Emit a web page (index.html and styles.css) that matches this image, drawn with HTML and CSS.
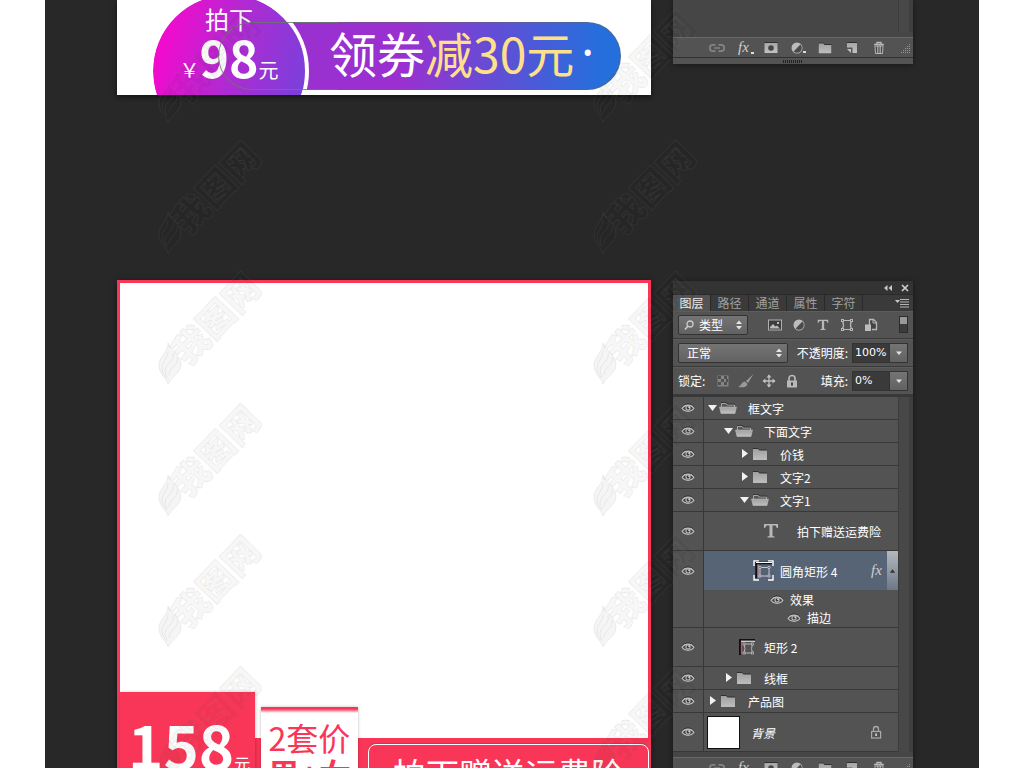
FILE: index.html
```html
<!DOCTYPE html>
<html lang="zh-CN">
<head>
<meta charset="utf-8">
<meta name="viewport" content="width=device-width, initial-scale=1">
<title>图层</title>
<link rel="stylesheet" href="styles.css">
</head>
<body>
<svg class="sprite" aria-hidden="true">
  <defs>
    <linearGradient id="metal" x1="0" y1="0" x2="0" y2="1"><stop offset="0" stop-color="#a6a6a6"/><stop offset="1" stop-color="#c2c2c2"/></linearGradient>
    <linearGradient id="fold" x1="0" y1="0" x2="0" y2="1"><stop offset="0" stop-color="#a0a0a0"/><stop offset="1" stop-color="#bebebe"/></linearGradient>
  </defs>
  <symbol id="eye" viewBox="0 0 14 12">
    <path d="M1 5.2C3.4.9 10.6.9 13 5.2" fill="none" stroke="#2c2c2c" stroke-width="1"/>
    <path d="M1.2 6.3C3.5 2.2 10.5 2.2 12.8 6.3C10.5 10.3 3.5 10.3 1.2 6.3Z" fill="#454545" stroke="#bcbcbc" stroke-width="1.3"/>
    <circle cx="7" cy="6" r="2.6" fill="#b4b4b4"/><circle cx="7" cy="6" r="1.4" fill="#3a3a3a"/><circle cx="8" cy="5.3" r=".8" fill="#e6e6e6"/>
  </symbol>
  <symbol id="open" viewBox="0 0 12 12"><path d="M1 3H10L5.500 9Z" fill="#f2f2f2"/></symbol>
  <symbol id="closed" viewBox="0 0 12 12"><path d="M3 1V10L9 5.500Z" fill="#f2f2f2"/></symbol>
  <symbol id="folder" viewBox="0 0 18 14">
    <path d="M2 1H7L8 2.500H16V4H2Z" fill="#303030"/>
    <path d="M2 2H7L8.500 3.500H16V13H2Z" fill="url(#fold)"/>
  </symbol>
  <symbol id="folder-open" viewBox="0 0 18 14">
    <path d="M2.500 6V2.500H7L8 4H15.500V6" fill="#555" stroke="#a6a6a6" stroke-width="1"/>
    <path d="M2 1.500H7.500L8.500 3H16" fill="none" stroke="#303030" stroke-width=".8"/>
    <path d="M.5 6H17.500L16 12.500H2Z" fill="url(#fold)" stroke="#c4c4c4" stroke-width=".5"/>
  </symbol>
  <symbol id="shape" viewBox="0 0 14 14">
    <path d="M3 2.500H11M3 11.500H11M2.500 3Q4.500 7 2.500 11M11.500 3Q9.500 7 11.500 11" fill="none" stroke="#b8b8b8" stroke-width="1.200"/>
    <g fill="#484848" stroke="#b8b8b8"><rect x="1.500" y="1.500" width="2" height="2"/><rect x="10.500" y="1.500" width="2" height="2"/><rect x="1.500" y="10.500" width="2" height="2"/><rect x="10.500" y="10.500" width="2" height="2"/></g>
  </symbol>
  <symbol id="type" viewBox="0 0 16 16"><path d="M1 1H15V5H14L12.500 2.500H9.500V13L11.500 13.500V14.500H4.500V13.500L6.500 13V2.500H3.500L2 5H1Z" fill="#b8b8b8"/></symbol>
  <symbol id="adjust" viewBox="0 0 14 14"><circle cx="7" cy="7" r="5.500" fill="#bcbcbc"/><path d="M10.400 3.600A4.700 4.700 0 0 1 3.600 10.400Z" fill="#4a4a4a"/></symbol>
  <symbol id="lock" viewBox="0 0 12 14"><path d="M3 7V4.500A3 3 0 0 1 9 4.500V7" fill="none" stroke="#b8b8b8" stroke-width="1.700"/><rect x="1" y="6.500" width="10" height="7" fill="#b8b8b8"/><rect x="5" y="8.500" width="2" height="3" fill="#444"/></symbol>
  <symbol id="lock-line" viewBox="0 0 12 14"><path d="M3.500 6V4A2.500 2.500 0 0 1 8.500 4V6" fill="none" stroke="#aaa" stroke-width="1.300"/><rect x="1.600" y="6.500" width="9" height="6.500" fill="#505050" stroke="#aaa" stroke-width="1.200"/><rect x="5.200" y="8.500" width="1.800" height="2.500" fill="#ccc"/></symbol>
  <symbol id="updown" viewBox="0 0 8 10"><path d="M1 4L4 .5L7 4ZM1 6L4 9.500L7 6Z" fill="#e4e4e4"/></symbol>
  <symbol id="down" viewBox="0 0 8 8"><path d="M1 2.500H7L4 6Z" fill="#e4e4e4"/></symbol>
  <symbol id="link" viewBox="0 0 16 12"><path d="M6.500 2.800H4A3.200 3.200 0 0 0 4 9.200H6.500M9.500 2.800H12A3.200 3.200 0 0 1 12 9.200H9.500M5 6H11" fill="none" stroke="#858585" stroke-width="1.700"/></symbol>
  <symbol id="fx" viewBox="0 0 18 16"><text x="4" y="12" class="fx-glyph">fx</text></symbol>
  <symbol id="mask" viewBox="0 0 14 12"><path d="M.5 0H13.500V2H.5Z" fill="#303030"/><rect x=".5" y="1" width="13" height="10" fill="url(#metal)"/><circle cx="7" cy="6" r="2.800" fill="#444"/></symbol>
  <symbol id="new" viewBox="0 0 12 12"><path d="M1 0H11V2H1Z" fill="#303030"/><path d="M1 1H11V11H6.500V5.500H1Z" fill="url(#metal)"/><path d="M1 7H5V11Z" fill="#c2c2c2"/></symbol>
  <symbol id="trash" viewBox="0 0 12 14"><path d="M1 3.500H11M4 3V1.500H8V3" fill="none" stroke="#b8b8b8" stroke-width="1.300"/><path d="M2 5H10L9.500 12.500H2.500Z" fill="#3c3c3c" stroke="#b8b8b8"/><path d="M4.400 5V12M6 5V12M7.600 5V12" stroke="#b8b8b8" stroke-width=".9"/></symbol>
  <symbol id="grip" viewBox="0 0 10 10"><path d="M8 1.500h1M6 3.500h1M8 3.500h1M4 5.500h1M6 5.500h1M8 5.500h1M2 7.500h1M4 7.500h1M6 7.500h1M8 7.500h1M0 9.500h1M2 9.500h1M4 9.500h1M6 9.500h1M8 9.500h1" stroke="#999"/></symbol>
  <symbol id="mark" viewBox="0 0 110 122">
    <path d="M11 76C13 84 23 86 24 97C24 106 16 108 11 117C9 110 2 108 2 98C2 89 11 86 11 76Z"/>
    <path d="M11 84C11 92 5 94 5 101C5 105 7 108 9 110M16 86C18 94 9 96 8 103C8 106 10 108 10 111M20 90C22 99 12 99 12 108" fill="none"/>
    <text transform="translate(31 100) rotate(-46)" x="0" y="0">我图网</text>
  </symbol>
</svg>

<main class="stage">
  <div class="pair pair-top">
    <section class="poster coupon" aria-label="优惠券">
      <div class="pill"><span>领券<b>减30元</b></span><span class="dot">·</span></div>
      <div class="disc">
        <span class="disc-label">拍下</span>
        <span class="disc-price"><small>￥</small><strong>98</strong><small>元</small></span>
      </div>
      <div class="pill-outline"></div>
    </section>
    <aside class="panel panel-end" aria-label="图层面板">
      <div class="layers"><div class="blank"></div><div class="scroll"></div></div>
      <div class="tools">
        <button aria-label="链接"><svg class="i16"><use href="#link"/></svg></button>
        <button aria-label="样式" class="more"><svg class="i18"><use href="#fx"/></svg></button>
        <button aria-label="蒙版"><svg class="i14"><use href="#mask"/></svg></button>
        <button aria-label="调整" class="more"><svg class="i14"><use href="#adjust"/></svg></button>
        <button aria-label="新建组"><svg class="i16"><use href="#folder"/></svg></button>
        <button aria-label="新建图层"><svg class="i12"><use href="#new"/></svg></button>
        <button aria-label="删除"><svg class="i14"><use href="#trash"/></svg></button>
        <svg class="grip"><use href="#grip"/></svg>
      </div>
      <div class="handle"><i></i></div>
    </aside>
  </div>

  <div class="pair">
    <section class="poster frame" aria-label="价格框">
      <div class="photo"></div>
      <div class="offers">
        <div class="price"><strong>158</strong><small>元</small></div>
        <div class="bundle"><span>2套价</span><b>男+女</b></div>
        <div class="banner">拍下赠送运费险</div>
      </div>
    </section>

    <aside class="panel panel-full" aria-label="图层">
      <div class="titlebar">
        <button aria-label="折叠"><svg class="i10" viewBox="0 0 10 10"><path d="M4.500 2V8L1 5ZM9 2V8L5.500 5Z" fill="#c8c8c8"/></svg></button>
        <button aria-label="关闭"><svg class="i10" viewBox="0 0 10 10"><path d="M2 2L8 8M8 2L2 8" stroke="#d0d0d0" stroke-width="1.600"/></svg></button>
      </div>
      <div class="tabs">
        <button class="on">图层</button><button>路径</button><button>通道</button><button>属性</button><button>字符</button>
        <button class="menu" aria-label="菜单"><svg viewBox="0 0 16 10"><path d="M1 2H6L3.500 5Z" fill="#c8c8c8"/><path d="M6 1.500H15M6 4H15M6 6.500H15M6 9H15" stroke="#b4b4b4"/></svg></button>
      </div>
      <div class="bar filter">
        <label class="combo kind">
          <svg class="lens" viewBox="0 0 12 12"><circle cx="7" cy="5" r="3" fill="none" stroke="#ccc" stroke-width="1.300"/><path d="M5 7L2 10.500" stroke="#ccc" stroke-width="1.600"/></svg>
          <select aria-label="筛选类型"><option>类型</option></select>
          <svg class="arrow"><use href="#updown"/></svg>
        </label>
        <div class="filters">
          <button aria-label="像素"><svg class="i14" viewBox="0 0 14 12"><rect x=".5" y="1" width="13" height="10" fill="#3d3d3d" stroke="#b0b0b0"/><path d="M2 9.500V8L5 5L7.500 7.500L9 6.500L12 9.500Z" fill="#bbb"/><rect x="9" y="3" width="2" height="2" fill="#bbb"/></svg></button>
          <button aria-label="调整"><svg class="i14"><use href="#adjust"/></svg></button>
          <button aria-label="文字"><svg class="i12"><use href="#type"/></svg></button>
          <button aria-label="形状"><svg class="i14"><use href="#shape"/></svg></button>
          <button aria-label="智能对象"><svg class="i14" viewBox="0 0 14 14"><path d="M5.500 7V1.500H9.500L12.500 4.500V11.500H8" fill="#444" stroke="#b8b8b8" stroke-width="1.300"/><path d="M9 1V5H13" fill="none" stroke="#b8b8b8"/><rect x="1" y="6.500" width="6" height="6.500" fill="#bcbcbc"/></svg></button>
        </div>
        <button class="toggle" aria-label="开关筛选"><i></i></button>
      </div>
      <div class="bar">
        <label class="combo mode"><select aria-label="混合模式"><option>正常</option></select><svg class="arrow"><use href="#updown"/></svg></label>
        <label class="value" for="opacity">不透明度:</label>
        <span class="field"><input id="opacity" value="100%"><button aria-label="不透明度选项"><svg><use href="#down"/></svg></button></span>
      </div>
      <div class="bar">
        <span class="locks">锁定:</span>
        <button aria-label="锁定透明像素"><svg class="i14" viewBox="0 0 14 14"><path d="M1.500 1.500H12.500V12.500H1.500Z" fill="#858585"/><path d="M2 2h3v3h-3zM8 2h3v3h-3zM5 5h3v3h-3zM10 5h2v3h-2zM2 8h3v3h-3zM8 8h3v3h-3z" fill="#505050"/></svg></button>
        <button aria-label="锁定图像"><svg class="i16" viewBox="0 0 16 14"><path d="M15.500 0L8 7L10 9ZM7 7.500L9.500 10C8 14 4 13.500 0 13C3 12 3.500 8 7 7.500Z" fill="#9a9a9a"/></svg></button>
        <button aria-label="锁定位置"><svg class="i14" viewBox="0 0 14 14"><path d="M7 1V13M1 7H13" stroke="#c0c0c0" stroke-width="1.300"/><path d="M4.500 3.500L7 .5L9.500 3.500ZM4.500 10.500L7 13.500L9.500 10.500ZM3.500 4.500L.5 7L3.500 9.500ZM10.500 4.500L13.500 7L10.500 9.500Z" fill="#c0c0c0"/></svg></button>
        <button aria-label="全部锁定"><svg class="i14"><use href="#lock"/></svg></button>
        <label class="value" for="fill">填充:</label>
        <span class="field"><input id="fill" value="0%"><button aria-label="填充选项"><svg><use href="#down"/></svg></button></span>
      </div>

      <div class="layers">
        <ul class="list">
          <li><button class="eye" aria-label="显示"><svg><use href="#eye"/></svg></button><div class="node l0"><svg class="tri"><use href="#open"/></svg><svg class="dir"><use href="#folder-open"/></svg><span>框文字</span></div></li>
          <li><button class="eye" aria-label="显示"><svg><use href="#eye"/></svg></button><div class="node l1"><svg class="tri"><use href="#open"/></svg><svg class="dir"><use href="#folder-open"/></svg><span>下面文字</span></div></li>
          <li><button class="eye" aria-label="显示"><svg><use href="#eye"/></svg></button><div class="node l2"><svg class="tri"><use href="#closed"/></svg><svg class="dir"><use href="#folder"/></svg><span>价钱</span></div></li>
          <li><button class="eye" aria-label="显示"><svg><use href="#eye"/></svg></button><div class="node l2"><svg class="tri"><use href="#closed"/></svg><svg class="dir"><use href="#folder"/></svg><span>文字2</span></div></li>
          <li><button class="eye" aria-label="显示"><svg><use href="#eye"/></svg></button><div class="node l2"><svg class="tri"><use href="#open"/></svg><svg class="dir"><use href="#folder-open"/></svg><span>文字1</span></div></li>
          <li class="tall"><button class="eye" aria-label="显示"><svg><use href="#eye"/></svg></button><div class="node text-layer"><svg class="i18"><use href="#type"/></svg><span>拍下赠送运费险</span></div></li>
          <li class="styled">
            <button class="eye" aria-label="显示"><svg><use href="#eye"/></svg></button>
            <div class="stack">
              <div class="node selected">
                <svg class="thumb-lg" viewBox="0 0 21 21"><path d="M1 6V1H6M15 1H20V6M20 15V20H15M6 20H1V15" fill="none" stroke="#fff" stroke-width="1.400"/><path d="M3.500 18V3H19" fill="none" stroke="#111" stroke-width="2.500"/><path d="M5 18V4.500" fill="none" stroke="#e8a0ad" stroke-width="1"/><path d="M3 2.500H19" stroke="#fff" stroke-width="1"/><path d="M7 7.500H16V16H7Z" fill="#566170" stroke="#c4c8d0"/><g fill="#566170" stroke="#c4c8d0" stroke-width=".9"><circle cx="7" cy="7.500" r="1.200"/><circle cx="16" cy="7.500" r="1.200"/><circle cx="7" cy="16" r="1.200"/><circle cx="16" cy="16" r="1.200"/></g></svg>
                <span>圆角矩形 4</span>
                <svg class="fx-badge"><use href="#fx"/></svg>
                <button class="fold" aria-label="折叠效果"><svg viewBox="0 0 8 8"><path d="M1 6H7L4 2Z" fill="#333"/></svg></button>
              </div>
              <div class="effect"><button aria-label="显示效果"><svg><use href="#eye"/></svg></button><span>效果</span></div>
              <div class="effect sub"><button aria-label="显示描边"><svg><use href="#eye"/></svg></button><span>描边</span></div>
            </div>
          </li>
          <li class="tall"><button class="eye" aria-label="显示"><svg><use href="#eye"/></svg></button><div class="node rect-layer"><svg class="thumb-sm" viewBox="0 0 16 16"><path d="M1 16V1H16" fill="none" stroke="#111" stroke-width="2"/><path d="M2.500 15V3" stroke="#f83a5a" stroke-width="1.300"/><path d="M2 2.200H16" stroke="#fff" stroke-width="1"/><path d="M5.500 5H13M5.500 14H13M5 5Q7 9.500 5 14M13.500 5Q11.500 9.500 13.500 14" fill="none" stroke="#b8b8b8"/><g fill="#505050" stroke="#b8b8b8" stroke-width=".8"><rect x="4" y="4" width="2" height="2"/><rect x="12.500" y="4" width="2" height="2"/><rect x="4" y="13" width="2" height="2"/><rect x="12.500" y="13" width="2" height="2"/></g></svg><span>矩形 2</span></div></li>
          <li><button class="eye" aria-label="显示"><svg><use href="#eye"/></svg></button><div class="node l1"><svg class="tri"><use href="#closed"/></svg><svg class="dir"><use href="#folder"/></svg><span>线框</span></div></li>
          <li><button class="eye" aria-label="显示"><svg><use href="#eye"/></svg></button><div class="node l0"><svg class="tri"><use href="#closed"/></svg><svg class="dir"><use href="#folder"/></svg><span>产品图</span></div></li>
          <li class="tall"><button class="eye" aria-label="显示"><svg><use href="#eye"/></svg></button><div class="node base"><i class="paper"></i><em>背景</em><svg class="i14"><use href="#lock-line"/></svg></div></li>
        </ul>
        <div class="scroll"></div>
      </div>
      <div class="tools">
        <button aria-label="链接"><svg class="i16"><use href="#link"/></svg></button>
        <button aria-label="样式" class="more"><svg class="i18"><use href="#fx"/></svg></button>
        <button aria-label="蒙版"><svg class="i14"><use href="#mask"/></svg></button>
        <button aria-label="调整" class="more"><svg class="i14"><use href="#adjust"/></svg></button>
        <button aria-label="新建组"><svg class="i16"><use href="#folder"/></svg></button>
        <button aria-label="新建图层"><svg class="i12"><use href="#new"/></svg></button>
        <button aria-label="删除"><svg class="i14"><use href="#trash"/></svg></button>
        <svg class="grip"><use href="#grip"/></svg>
      </div>
    </aside>
  </div>

  <svg class="watermark" aria-hidden="true">
    <g id="marks">
      <use href="#mark" x="112" y="5" width="110" height="122"/>
      <use href="#mark" x="112" y="136" width="110" height="122"/>
      <use href="#mark" x="112" y="267" width="110" height="122"/>
      <use href="#mark" x="112" y="399" width="110" height="122"/>
      <use href="#mark" x="112" y="530" width="110" height="122"/>
      <use href="#mark" x="112" y="662" width="110" height="122"/>
    </g>
    <use href="#marks" x="435"/>
  </svg>
</main>
</body>
</html>
```

FILE: styles.css
```css
* { box-sizing: border-box; }

body {
  margin: 0;
  padding: 0 45px;
  background: #fff;
  color: #fff;
  font: 12px/16px "Noto Sans CJK SC", "Noto Sans", sans-serif;
}

button, input, select { font: inherit; color: inherit; border: 0; padding: 0; margin: 0; background: none; border-radius: 0; }
button { display: flex; align-items: center; justify-content: center; }
svg { display: block; flex: none; }

.sprite { position: absolute; width: 0; height: 0; }
.fx-glyph { font: italic 15px "Liberation Serif", serif; fill: #d0d0d0; }

.i10 { width: 10px; height: 10px; }
.i12 { width: 12px; height: 12px; }
.i14 { width: 14px; height: 14px; }
.i16 { width: 16px; height: 14px; }
.i18 { width: 18px; height: 16px; }

.stage {
  position: relative;
  height: 100vh;
  overflow: hidden;
  background: #282828;
  padding: 0 66px 0 72px;
}

.pair { display: grid; grid-template-columns: minmax(0, 1fr) 240px; column-gap: 22px; }
.pair-top { align-items: start; margin-bottom: 185px; }
.poster { position: relative; background: #fff; box-shadow: 0 2px 6px #0008; }

/* coupon poster */
.coupon { height: 95px; padding: 22px 30px 5px 101px; clip-path: inset(0 -8px -8px -8px); }
.pill {
  display: flex;
  height: 68px;
  padding-left: 110px;
  border: 1px solid #6668;
  border-radius: 34px;
  background: linear-gradient(90deg, #9b30d0 45%, #246fdc 95%);
  background-origin: border-box;
  font-size: 48px;
  line-height: 58px;
  white-space: nowrap;
}
.pill b { font-weight: 400; color: #ffe08a; }
.dot { margin-left: 7px; font-family: "Noto Sans", sans-serif; }
.disc {
  position: absolute;
  left: 32px;
  top: -9px;
  width: 160px;
  height: 160px;
  padding-top: 12px;
  border: 4px solid #fff;
  border-radius: 50%;
  background: linear-gradient(105deg, #fb06cc 5%, #b02ad2 50%, #7542dc 95%);
  background-clip: padding-box;
  display: flex;
  flex-direction: column;
  align-items: center;
  clip-path: inset(0 0 56px 0);
}
.disc-label { font-size: 24px; line-height: 24px; }
.disc-price { display: flex; align-items: baseline; line-height: 50px; }
.disc-price strong { font-size: 50px; font-weight: 700; }
.disc-price small { font-size: 20px; }
.pill-outline {
  position: absolute;
  left: 101px;
  top: 22px;
  width: 120px;
  height: 68px;
  border: 1px solid #6a7a6a;
  border-right: 0;
  border-radius: 34px 0 0 34px;
  opacity: .8;
}

/* price frame poster */
.frame { border: 3px solid #f93657; border-bottom: 0; }
.photo { height: 455px; }
.offers { display: flex; align-items: flex-start; background: #f93657; height: 90px; }
.price {
  flex: none;
  width: 135px;
  height: 136px;
  margin-top: -46px;
  padding: 20px 0 0 8px;
  background: #f93657;
  box-shadow: 1px 0 3px #0003;
  white-space: nowrap;
  line-height: 64px;
}
.price strong { font-size: 60px; font-weight: 700; }
.price small { font-size: 16px; }
.bundle {
  flex: none;
  width: 97px;
  height: 120px;
  margin: -31px 10px 0 6px;
  padding-top: 12px;
  background: linear-gradient(#f93657 2px, #fff 6px);
  box-shadow: 0 0 3px #0004;
  color: #f93657;
  font-size: 32px;
  line-height: 36px;
  text-align: center;
}
.bundle span, .bundle b { display: block; }
.banner {
  flex: 1;
  margin: 6px -1px 0 0;
  height: 64px;
  border: 1px solid #fff;
  border-radius: 8px;
  box-shadow: 0 -1px 0 #666;
  font-size: 33px;
  line-height: 56px;
  text-align: center;
  white-space: nowrap;
}

/* layers panel */
.panel { background: #535353; box-shadow: 0 1px 6px #0006; }
.panel-full { margin-top: 1px; }
.titlebar { height: 13px; background: #333; display: flex; justify-content: flex-end; align-items: center; gap: 7px; padding-right: 3px; }
.tabs { display: flex; height: 17px; background: #3a3a3a; border-top: 1px solid #2a2a2a; }
.tabs button { width: 38px; border-right: 1px solid #2a2a2a; color: #a0a0a0; line-height: 16px; }
.tabs .on { background: #535353; color: #eee; }
.tabs .menu { width: auto; margin-left: auto; border: 0; padding-right: 3px; }
.menu svg { width: 16px; height: 10px; }
.bar { display: flex; align-items: center; height: 28px; padding: 0 5px; border-bottom: 1px solid #3a3a3a; box-shadow: inset 0 1px 0 #5c5c5c; }
.bar > button { width: 23px; }
.combo {
  display: flex;
  align-items: center;
  height: 20px;
  padding: 0 4px;
  border: 1px solid #333;
  border-radius: 2px;
  background: linear-gradient(#747474, #626262);
}
.combo select { appearance: none; flex: 1; min-width: 0; padding-left: 4px; }
.combo .arrow { width: 8px; height: 10px; }
.kind { width: 70px; }
.lens { width: 12px; height: 12px; }
.mode { width: 110px; }
.filters { flex: 1; display: flex; justify-content: center; gap: 10px; padding-right: 2px; }
.toggle i { width: 9px; height: 17px; border: 1px solid #2c2c2c; background: linear-gradient(#999 45%, #3c3c3c 50%); }
.filters button { width: 14px; }
.bar .toggle { width: 9px; }
.value { margin-left: auto; padding-right: 4px; }
.locks { width: 33px; }
.field { display: flex; width: 56px; height: 20px; border: 1px solid #333; background: #3a3a3a; }
.field input { width: 36px; padding-left: 2px; font-family: "DejaVu Sans", sans-serif; font-size: 11px; }
.field button { width: 18px; background: linear-gradient(#747474, #626262); border-left: 1px solid #333; }
.field svg { width: 8px; height: 8px; }

.layers { display: flex; border-top: 2px solid #383838; padding-bottom: 5px; background: #464646; }
.blank { flex: 1; height: 32px; background: #464646; }
.scroll { flex: none; width: 15px; border-left: 1px solid #3c3c3c; border-right: 4px solid #3f3f3f; background: #484848; }
.panel-end .layers { border-top: 0; }
.list { flex: 1; min-width: 0; margin: 0; padding: 0; list-style: none; background: #535353; }
.list li { display: flex; min-height: 23px; border-bottom: 1px solid #383838; }
.list .tall { min-height: 39px; }
.eye { flex: none; width: 31px; border-right: 1px solid #383838; }
.eye svg, .effect svg { width: 14px; height: 12px; }
.node { flex: 1; display: flex; align-items: center; padding-left: 3px; }
.node span, .node em { padding-top: 2px; }
.l1 { padding-left: 19px; }
.l2 { padding-left: 35px; }
.tri { width: 12px; height: 12px; }
.dir { width: 18px; height: 14px; margin-right: 11px; }
.text-layer { padding-left: 58px; gap: 17px; }
.rect-layer { padding-left: 35px; gap: 9px; }
.thumb-sm { width: 16px; height: 16px; }
.thumb-lg { width: 21px; height: 21px; }
.stack { flex: 1; display: flex; flex-direction: column; }
.selected { flex: none; height: 39px; padding-left: 49px; gap: 6px; background: #566476; }
.fx-badge { width: 18px; height: 16px; margin-left: auto; margin-right: -4px; }
.fold { width: 11px; height: 39px; background: linear-gradient(#b4b8be, #6c7888); }
.fold svg { width: 7px; height: 8px; }
.styled .eye { align-items: flex-start; padding-top: 14px; }
.effect { display: flex; align-items: center; gap: 6px; height: 19px; padding-left: 66px; }
.effect:last-child { height: 18px; }
.sub { padding-left: 83px; }
.paper { width: 33px; height: 33px; border: 1px solid #111; background: #fff; }
.base { gap: 11px; padding-right: 15px; }
.base svg { margin-left: auto; }

.tools { display: flex; align-items: center; height: 20px; padding: 0 2px 0 30px; background: #535353; border-top: 1px solid #686868; }
.tools button { width: 27px; }
.more::after { content: ""; align-self: flex-end; width: 3px; height: 2px; margin: 0 0 2px -1px; background: #ddd; }
.grip { width: 10px; height: 10px; margin-left: auto; }
.handle { display: flex; justify-content: center; align-items: center; height: 7px; border-top: 1px solid #303030; }
.handle i { width: 20px; height: 3px; background: repeating-linear-gradient(90deg, #222 0 1px, #535353 1px 2px); }

.watermark { position: absolute; inset: 0; width: 100%; height: 100%; pointer-events: none; fill: rgba(0, 0, 0, .04); stroke: rgba(128, 128, 128, .13); stroke-width: 1px; font-size: 36px; font-weight: 900; }
```
